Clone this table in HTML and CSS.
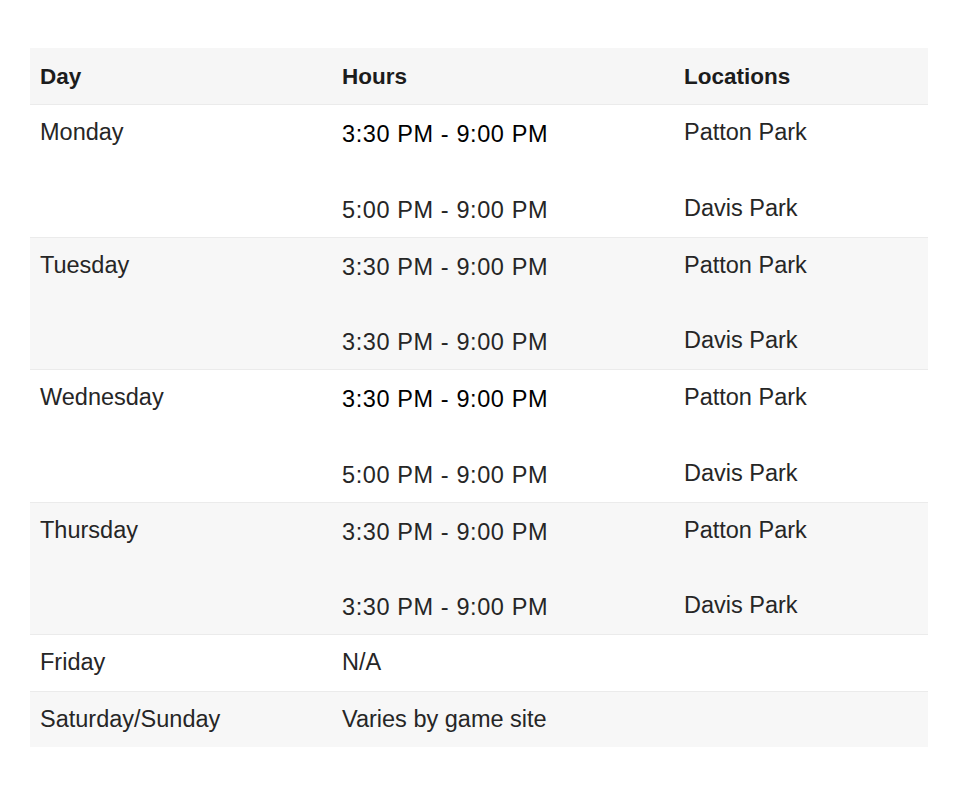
FILE: index.html
```html
<!DOCTYPE html>
<html lang="en">
<head>
<meta charset="utf-8">
<title>Schedule</title>
<link rel="stylesheet" href="styles.css">
</head>
<body>
<div class="table">
  <div class="row head">
    <div class="cell">Day</div>
    <div class="cell">Hours</div>
    <div class="cell">Locations</div>
  </div>
  <div class="row">
    <div class="cell">Monday</div>
    <div class="cell stack hours"><span class="dark">3:30 PM - 9:00 PM</span><span>5:00 PM - 9:00 PM</span></div>
    <div class="cell stack"><span>Patton Park</span><span>Davis Park</span></div>
  </div>
  <div class="row alt">
    <div class="cell">Tuesday</div>
    <div class="cell stack hours"><span>3:30 PM - 9:00 PM</span><span>3:30 PM - 9:00 PM</span></div>
    <div class="cell stack"><span>Patton Park</span><span>Davis Park</span></div>
  </div>
  <div class="row">
    <div class="cell">Wednesday</div>
    <div class="cell stack hours"><span class="dark">3:30 PM - 9:00 PM</span><span>5:00 PM - 9:00 PM</span></div>
    <div class="cell stack"><span>Patton Park</span><span>Davis Park</span></div>
  </div>
  <div class="row alt">
    <div class="cell">Thursday</div>
    <div class="cell stack hours"><span>3:30 PM - 9:00 PM</span><span>3:30 PM - 9:00 PM</span></div>
    <div class="cell stack"><span>Patton Park</span><span>Davis Park</span></div>
  </div>
  <div class="row single">
    <div class="cell">Friday</div>
    <div class="cell">N/A</div>
    <div class="cell"></div>
  </div>
  <div class="row alt single last">
    <div class="cell">Saturday/Sunday</div>
    <div class="cell">Varies by game site</div>
    <div class="cell"></div>
  </div>
</div>
</body>
</html>
```

FILE: styles.css
```css
html, body {
  margin: 0;
  padding: 0;
  background: #ffffff;
}
body {
  font-family: "Liberation Sans", Arial, sans-serif;
  font-size: 23.5px;
  color: #262626;
}
.table {
  margin: 48px 0 0 30px;
  width: 898px;
}
.row {
  display: grid;
  grid-template-columns: 302px 342px 1fr;
  border-top: 1px solid #ebebeb;
  background: #ffffff;
}
.row.alt {
  background: #f7f7f7;
}
.row.head {
  border-top: none;
  background: #f6f6f6;
  font-weight: bold;
  font-size: 22.5px;
  color: #1c1c1c;
}
.row.head .cell {
  padding: 15px 10px 13px;
}
.cell {
  padding: 13px 10px 15px;
  line-height: 28px;
}
.row.last .cell {
  padding-bottom: 14px;
}
.stack {
  display: flex;
  flex-direction: column;
  gap: 47.5px;
}
.hours {
  padding-top: 15px;
  padding-bottom: 13px;
  letter-spacing: 0.6px;
}
.dark {
  color: #000000;
}
```
